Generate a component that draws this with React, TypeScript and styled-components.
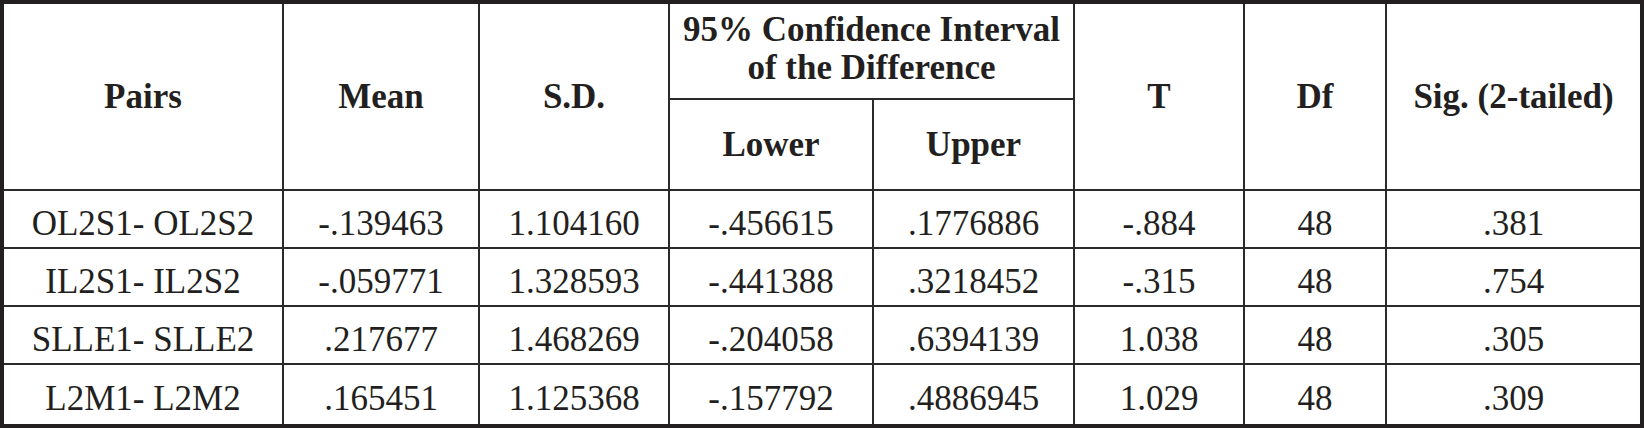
import { createGlobalStyle } from 'styled-components'
import styled from 'styled-components'

const GlobalStyle = createGlobalStyle`
    html, body {
        margin: 0;
        padding: 0;
        background: #fff;
    }
`

const rows = [
    ['OL2S1- OL2S2', '-.139463', '1.104160', '-.456615', '.1776886', '-.884', '48', '.381'],
    ['IL2S1- IL2S2', '-.059771', '1.328593', '-.441388', '.3218452', '-.315', '48', '.754'],
    ['SLLE1- SLLE2', '.217677', '1.468269', '-.204058', '.6394139', '1.038', '48', '.305'],
    ['L2M1- L2M2', '.165451', '1.125368', '-.157792', '.4886945', '1.029', '48', '.309'],
]

const colWidths = [279, 196, 190, 204, 201, 170, 142, 254]

export default function App() {
    return (
        <>
            <GlobalStyle />
            <Frame>
                <Table>
                    <colgroup>
                        {colWidths.map((w, i) => (
                            <col key={i} style={{ width: w }} />
                        ))}
                    </colgroup>
                    <thead>
                        <Row $h={95}>
                            <Th rowSpan={2}>Pairs</Th>
                            <Th rowSpan={2}>Mean</Th>
                            <Th rowSpan={2}>S.D.</Th>
                            <Th colSpan={2} $lift>
                                95% Confidence Interval
                                <br />
                                of the Difference
                            </Th>
                            <Th rowSpan={2}>T</Th>
                            <Th rowSpan={2}>Df</Th>
                            <Th rowSpan={2}>Sig. (2-tailed)</Th>
                        </Row>
                        <Row $h={91}>
                            <Th>Lower</Th>
                            <Th>Upper</Th>
                        </Row>
                    </thead>
                    <tbody>
                        {rows.map((r, i) => (
                            <Row key={i} $h={i === rows.length - 1 ? 60 : 58}>
                                {r.map((v, j) => (
                                    <Td key={j}>{v}</Td>
                                ))}
                            </Row>
                        ))}
                    </tbody>
                </Table>
            </Frame>
        </>
    )
}

const Frame = styled.div`
    box-sizing: border-box;
    width: 1644px;
    height: 428px;
    border: 4px solid #231f20;
    background: #fff;
    overflow: hidden;
`

const Table = styled.table`
    width: 100%;
    height: 100%;
    table-layout: fixed;
    border-collapse: collapse;
    border-style: hidden;
    font-family: 'Liberation Serif', 'Times New Roman', serif;
    color: #231f20;
`

const Row = styled.tr<{ $h: number }>`
    height: ${(p) => p.$h}px;
`

const Th = styled.th<{ $lift?: boolean }>`
    border: 2px solid #2b2a2a;
    padding: ${(p) => (p.$lift ? '0 4px 4px' : '0 4px')};
    font-size: 35px;
    line-height: 38px;
    font-weight: bold;
    text-align: center;
    vertical-align: middle;
    white-space: nowrap;
`

const Td = styled.td`
    border: 2px solid #2b2a2a;
    padding: 9px 4px 0 4px;
    font-size: 35px;
    line-height: 38px;
    text-align: center;
    vertical-align: middle;
    white-space: nowrap;
`
